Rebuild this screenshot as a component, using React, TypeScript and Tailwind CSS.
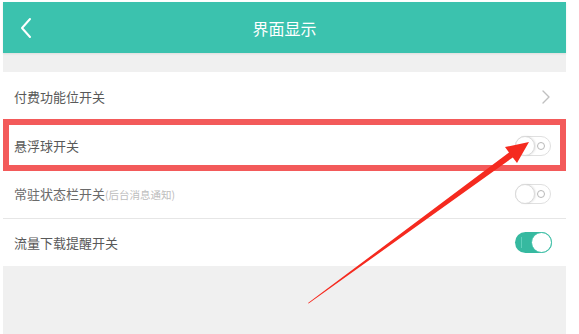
import React from "react";

function ToggleOff() {
  return (
    <div className="relative w-[36px] h-[20px] rounded-full border border-[#e0e0e0] bg-white">
      <div className="absolute left-[-1px] top-[-1px] w-[20px] h-[20px] rounded-full bg-white border border-[#dadada] shadow-[1px_0_2px_rgba(0,0,0,0.1)]" />
      <div className="absolute right-[5px] top-[5px] w-[8px] h-[8px] rounded-full border border-[#b8b8b8]" />
    </div>
  );
}

function ToggleOn() {
  return (
    <div className="relative w-[37px] h-[21px] rounded-full bg-[#36b9a0]">
      <div className="absolute left-[6px] top-[5px] w-[1px] h-[11px] bg-[#5fd0bb]" />
      <div className="absolute right-0 top-0 w-[21px] h-[21px] rounded-full bg-white border border-[#3cbfa6]" />
    </div>
  );
}

export default function App() {
  return (
    <div
      className="relative w-[579px] h-[334px] bg-white overflow-hidden"
      style={{ fontFamily: '"Noto Sans CJK SC", "Noto Sans", sans-serif' }}
    >
      <div className="ml-[3px] mt-[2px] w-[563px] h-[332px] bg-[#f0f0f0] flex flex-col">
        <div className="h-[51px] bg-[#3bc2ae] flex items-center shadow-[0_1px_2px_rgba(0,0,0,0.08)]">
          <div className="w-[50px] pl-[16px] flex items-center">
            <svg width="14" height="22" viewBox="0 0 14 22" fill="none">
              <path d="M11 2 L3 11 L11 20" stroke="white" strokeWidth="2" strokeLinecap="round" strokeLinejoin="round" />
            </svg>
          </div>
          <div className="flex-1 text-center text-white text-[16px] leading-none">界面显示</div>
          <div className="w-[50px]" />
        </div>
        <div className="h-[19px]" />
        <div className="bg-white">
          <div className="h-[49px] flex items-center justify-between pl-[11px] pr-[16px]">
            <span className="text-[13px] text-[#595959]">付费功能位开关</span>
            <svg width="8" height="14" viewBox="0 0 8 14" fill="none">
              <path d="M1 1 L7 7 L1 13" stroke="#c0c0c0" strokeWidth="1.4" strokeLinecap="round" strokeLinejoin="round" />
            </svg>
          </div>
          <div className="relative h-[49px] flex items-center justify-between pl-[11px] pr-[15px]">
            <span className="text-[13px] text-[#595959]">悬浮球开关</span>
            <ToggleOff />
            <div className="absolute left-0 right-0 top-[-2px] bottom-[-1px] border-[6px] border-[#f35a5a]" />
          </div>
          <div className="h-[49px] flex items-center justify-between pl-[11px] pr-[15px] border-b border-[#e6e6e6]">
            <span className="text-[13px] text-[#6a6a6a]">
              常驻状态栏开关<span className="text-[10.5px] text-[#bdbdbd]">(后台消息通知)</span>
            </span>
            <ToggleOff />
          </div>
          <div className="h-[47px] flex items-center justify-between pl-[11px] pr-[14px]">
            <span className="text-[13px] text-[#595959]">流量下载提醒开关</span>
            <ToggleOn />
          </div>
        </div>
        <div className="flex-1" />
      </div>
      <svg className="absolute inset-0 pointer-events-none" width="579" height="334" viewBox="0 0 579 334">
        <polygon
          points="308,303 509,152.6 505,147 529,142 517,163 512.8,157.4 308.6,303.6"
          fill="#f52a1f"
        />
      </svg>
    </div>
  );
}
